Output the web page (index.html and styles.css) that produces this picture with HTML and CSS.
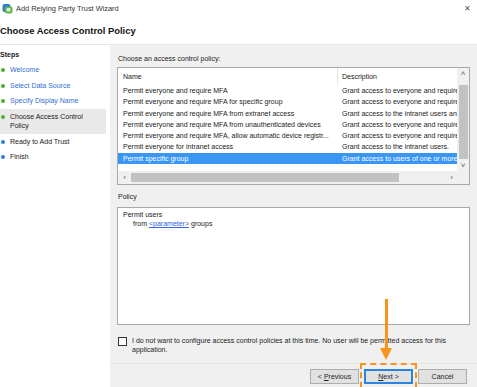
FILE: index.html
```html
<!DOCTYPE html>
<html>
<head>
  <meta charset="utf-8">
  <title>Add Relying Party Trust Wizard</title>
  <link rel="stylesheet" href="styles.css">
</head>
<body>
  <div class="window">
    <div class="titlebar">
      <svg class="app-icon" width="11" height="11" viewBox="0 0 11 11">
        <rect x="0.5" y="1" width="8" height="8" rx="2" fill="#2f7fd1"/>
        <rect x="3" y="3.5" width="7.5" height="7" rx="2" fill="#5fb84a"/>
        <rect x="4.5" y="5" width="4" height="3.5" rx="1" fill="#d9efc9"/>
      </svg>
      <span class="title">Add Relying Party Trust Wizard</span>
      <span class="close">&#x2715;</span>
    </div>

    <h1 class="heading">Choose Access Control Policy</h1>

    <div class="main">
      <div class="steps">
        <div class="steps-title">Steps</div>
        <ul class="step-list">
          <li class="step done link"><span class="dot"></span><span>Welcome</span></li>
          <li class="step done link"><span class="dot"></span><span>Select Data Source</span></li>
          <li class="step done link"><span class="dot"></span><span>Specify Display Name</span></li>
          <li class="step done current"><span class="dot"></span><span>Choose Access Control<br>Policy</span></li>
          <li class="step todo"><span class="dot"></span><span>Ready to Add Trust</span></li>
          <li class="step todo"><span class="dot"></span><span>Finish</span></li>
        </ul>
      </div>

      <div class="content">
        <div class="label">Choose an access control policy:</div>
        <div class="listbox">
          <div class="list-view">
            <div class="list-cols">
              <div class="row head">
                <div class="col-name">Name</div>
                <div class="col-desc">Description</div>
              </div>
              <div class="row"><div class="col-name">Permit everyone and require MFA</div><div class="col-desc">Grant access to everyone and require MFA</div></div>
              <div class="row"><div class="col-name">Permit everyone and require MFA for specific group</div><div class="col-desc">Grant access to everyone and require MFA</div></div>
              <div class="row"><div class="col-name">Permit everyone and require MFA from extranet access</div><div class="col-desc">Grant access to the intranet users and</div></div>
              <div class="row"><div class="col-name">Permit everyone and require MFA from unauthenticated devices</div><div class="col-desc">Grant access to everyone and require MFA</div></div>
              <div class="row"><div class="col-name">Permit everyone and require MFA, allow automatic device registr...</div><div class="col-desc">Grant access to everyone and require MFA</div></div>
              <div class="row"><div class="col-name">Permit everyone for intranet access</div><div class="col-desc">Grant access to the intranet users.</div></div>
              <div class="row selected"><div class="col-name">Permit specific group</div><div class="col-desc">Grant access to users of one or more</div></div>
            </div>
            <div class="vscroll">
              <span class="arrow">&#x2C4;</span>
              <div class="vtrack"><div class="vthumb"></div></div>
              <span class="arrow">&#x2C5;</span>
            </div>
          </div>
          <div class="hscroll">
            <span class="arrow">&#x2039;</span>
            <div class="htrack"><div class="hthumb"></div></div>
            <span class="arrow">&#x203A;</span>
            <span class="corner"></span>
          </div>
        </div>

        <div class="label policy-label">Policy</div>
        <div class="policy-box">
          <div>Permit users</div>
          <div class="indent">from <a href="#">&lt;parameter&gt;</a> groups</div>
        </div>

        <label class="check-row">
          <span class="checkbox"></span>
          <span>I do not want to configure access control policies at this time. No user will be permitted access for this application.</span>
        </label>

        <div class="footer">
          <button class="btn">&lt; <u>P</u>revious</button>
          <button class="btn primary"><u>N</u>ext &gt;</button>
          <button class="btn">Cancel</button>
        </div>
      </div>
    </div>

    <div class="callout-arrow">
      <div class="shaft"></div>
      <div class="head"></div>
    </div>
    <div class="callout-box"></div>
  </div>
</body>
</html>
```

FILE: styles.css
```css
html, body {
  margin: 0;
  padding: 0;
  background: #ffffff;
}
body {
  font-family: "Liberation Sans", Arial, sans-serif;
  font-size: 7px;
  color: #1a1a1a;
}
.window {
  position: relative;
  width: 477px;
  height: 387px;
  overflow: hidden;
  display: flex;
  flex-direction: column;
}

/* title bar */
.titlebar {
  height: 16px;
  display: flex;
  align-items: center;
  padding-left: 2px;
  padding-right: 6px;
}
.app-icon {
  margin-right: 3px;
}
.title {
  font-size: 7.4px;
  color: #333333;
  flex: 1;
}
.close {
  font-size: 8px;
  color: #555555;
}

.heading {
  margin: 0;
  height: 28px;
  line-height: 30px;
  font-size: 9.4px;
  font-weight: bold;
  color: #111111;
  border-bottom: 1px solid #e6e6e6;
}

.main {
  flex: 1;
  display: flex;
}

/* steps pane */
.steps {
  flex: none;
  width: 106px;
  padding-right: 4px;
  background: #ffffff;
}
.steps-title {
  font-weight: bold;
  line-height: 10px;
  padding-top: 5px;
}
.step-list {
  list-style: none;
  margin: 0;
  padding: 2px 0 0 0;
}
.step {
  display: flex;
  align-items: flex-start;
  line-height: 9.5px;
  padding: 3px 0 3px 1px;
}
.step.current {
  background: #e9e9e9;
}
.step.link {
  color: #2f6fd6;
}
.dot {
  width: 4px;
  height: 4px;
  border-radius: 50%;
  margin: 3px 5px 0 0;
  flex: none;
}
.done .dot {
  background: #4ab02e;
}
.todo .dot {
  background: #2f7ee0;
}

/* main content */
.content {
  flex: 1;
  min-width: 0;
  background: #f0f0f0;
  padding: 9px 7px 0 7px;
  display: flex;
  flex-direction: column;
}
.label {
  line-height: 10px;
  color: #222222;
  padding-left: 1px;
}
.listbox {
  margin-top: 3px;
  height: 116px;
  border: 1px solid #a9a9a9;
  background: #ffffff;
  display: flex;
  flex-direction: column;
}
.list-view {
  flex: 1;
  display: flex;
  overflow: hidden;
}
.list-cols {
  flex: 1;
  min-width: 0;
  overflow: hidden;
}
.row {
  display: flex;
  height: 11.25px;
  line-height: 11.25px;
  white-space: nowrap;
}
.row.head {
  height: 17px;
  line-height: 17px;
}
.row.head .col-desc {
  border-left: 1px solid #e5e5e5;
  padding-left: 4px;
}
.col-name {
  flex: none;
  width: 214px;
  padding-left: 5px;
  overflow: hidden;
}
.col-desc {
  flex: 1;
  padding-left: 5px;
  overflow: hidden;
}
.row.selected {
  background: #3a96f5;
  color: #ffffff;
}

.vscroll {
  flex: none;
  width: 12px;
  display: flex;
  flex-direction: column;
  align-items: center;
  background: #f0f0f0;
}
.arrow {
  flex: none;
  height: 11px;
  line-height: 11px;
  font-size: 8px;
  color: #606060;
  text-align: center;
  width: 11px;
}
.vtrack {
  flex: 1;
  width: 100%;
  padding-top: 6px;
}
.vthumb {
  width: 9px;
  margin: 0 auto;
  height: 74px;
  background: #c2c2c2;
}
.hscroll {
  flex: none;
  height: 13px;
  display: flex;
  align-items: center;
  background: #f0f0f0;
  padding-left: 1px;
}
.htrack {
  flex: 1;
  height: 100%;
  display: flex;
  align-items: center;
}
.hthumb {
  margin-left: 1px;
  width: 268px;
  height: 9px;
  background: #c2c2c2;
}
.corner {
  width: 12px;
  height: 13px;
  background: #f0f0f0;
}

.policy-label {
  margin-top: 7px;
}
.policy-box {
  margin-top: 5px;
  height: 112px;
  border: 1px solid #a9a9a9;
  background: #ffffff;
  padding: 2px 5px;
  line-height: 9px;
  color: #222222;
}
.policy-box .indent {
  padding-left: 10px;
}
.policy-box a {
  color: #3366e0;
}

.check-row {
  margin-top: 11px;
  display: flex;
  align-items: flex-start;
  line-height: 9px;
  padding-left: 1px;
  color: #222222;
}
.checkbox {
  flex: none;
  width: 7px;
  height: 7px;
  border: 1px solid #333333;
  background: #ffffff;
  margin: 0.5px 5px 0 0;
}

.footer {
  margin: 9px -7px 0 -7px;
  border-top: 1px solid #e4e4e4;
  padding: 5px 10px 0 0;
  display: flex;
  justify-content: flex-end;
  gap: 5px;
}
.btn {
  width: 49px;
  height: 15px;
  padding: 0;
  font-family: "Liberation Sans", Arial, sans-serif;
  font-size: 7px;
  color: #222222;
  background: #e1e1e1;
  border: 1px solid #adadad;
}
.btn.primary {
  border: 2px solid #2b84e0;
}

/* orange annotation */
.callout-arrow {
  position: absolute;
  left: 380px;
  top: 299px;
  width: 12px;
  display: flex;
  flex-direction: column;
  align-items: center;
}
.callout-arrow .shaft {
  width: 3px;
  height: 49px;
  background: #f7941d;
}
.callout-arrow .head {
  width: 0;
  height: 0;
  border-left: 6px solid transparent;
  border-right: 6px solid transparent;
  border-top: 12px solid #f7941d;
}
.callout-box {
  position: absolute;
  left: 360px;
  top: 363px;
  width: 53px;
  height: 30px;
  border: 2px dashed #f7941d;
}
```
